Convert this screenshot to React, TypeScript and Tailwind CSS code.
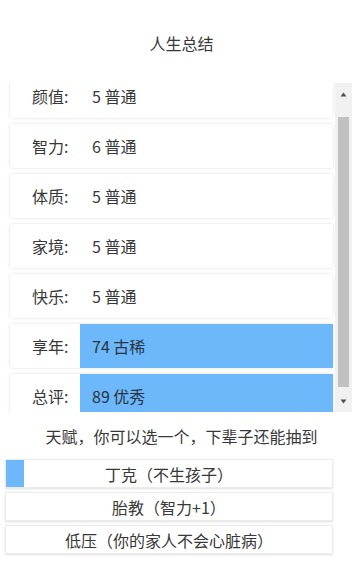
import React from "react";

const stats = [
  { label: "颜值:", value: "5 普通", hl: false },
  { label: "智力:", value: "6 普通", hl: false },
  { label: "体质:", value: "5 普通", hl: false },
  { label: "家境:", value: "5 普通", hl: false },
  { label: "快乐:", value: "5 普通", hl: false },
  { label: "享年:", value: "74 古稀", hl: true },
  { label: "总评:", value: "89 优秀", hl: true },
];

const talents = [
  { text: "丁克（不生孩子）", fill: true },
  { text: "胎教（智力+1）", fill: false },
  { text: "低压（你的家人不会心脏病）", fill: false },
];

export default function App() {
  return (
    <div
      className="w-[363px] h-[566px] bg-white text-[#383838] overflow-hidden"
      style={{ fontFamily: '"Noto Sans CJK SC", "Noto Sans", sans-serif' }}
    >
      <div className="h-[83px] flex items-center justify-center pt-[3px] text-[16px]">
        人生总结
      </div>
      <div className="h-[329px] flex">
        <div className="w-[335px] pl-[10px] pr-[2px] overflow-hidden">
          <div className="-mt-[9px] flex flex-col gap-[6px]">
            {stats.map((s) => (
              <div
                key={s.label}
                className="h-[44px] shrink-0 flex bg-white rounded-[2px] shadow-[0_0_3px_rgba(0,0,0,0.14)] text-[16px]"
              >
                <div className="w-[70px] pl-[22px] flex items-center">{s.label}</div>
                <div
                  className={
                    "flex-1 flex items-center pl-[12px] " +
                    (s.hl ? "bg-[#6cb8fb] text-[#2a3440]" : "")
                  }
                >
                  {s.value}
                </div>
              </div>
            ))}
          </div>
        </div>
        <div className="w-[17px] bg-[#f1f1f1] flex flex-col items-center">
          <div className="h-[22px] flex items-center justify-center">
            <svg width="7" height="5" viewBox="0 0 7 5">
              <path d="M3.5 0.5 L6.5 4.5 L0.5 4.5 Z" fill="#505050" />
            </svg>
          </div>
          <div className="flex-1 w-full px-[3px] pt-[12px] pb-[3px] flex">
            <div className="w-full bg-[#c1c1c1]" />
          </div>
          <div className="h-[22px] flex items-center justify-center">
            <svg width="7" height="5" viewBox="0 0 7 5">
              <path d="M0.5 0.5 L6.5 0.5 L3.5 4.5 Z" fill="#505050" />
            </svg>
          </div>
        </div>
      </div>
      <div className="h-[47px] flex items-center justify-center text-[16px]">
        天赋，你可以选一个，下辈子还能抽到
      </div>
      <div className="pl-[5px] w-[333px] flex flex-col gap-[4px]">
        {talents.map((t) => (
          <div
            key={t.text}
            className="relative h-[29px] flex items-center justify-center bg-white border border-[#ececec] shadow-[0_1px_2px_rgba(0,0,0,0.12)] text-[16px]"
          >
            {t.fill && <div className="absolute left-0 top-0 bottom-0 w-[18px] bg-[#6cb8fb]" />}
            <span className="relative">{t.text}</span>
          </div>
        ))}
      </div>
    </div>
  );
}
